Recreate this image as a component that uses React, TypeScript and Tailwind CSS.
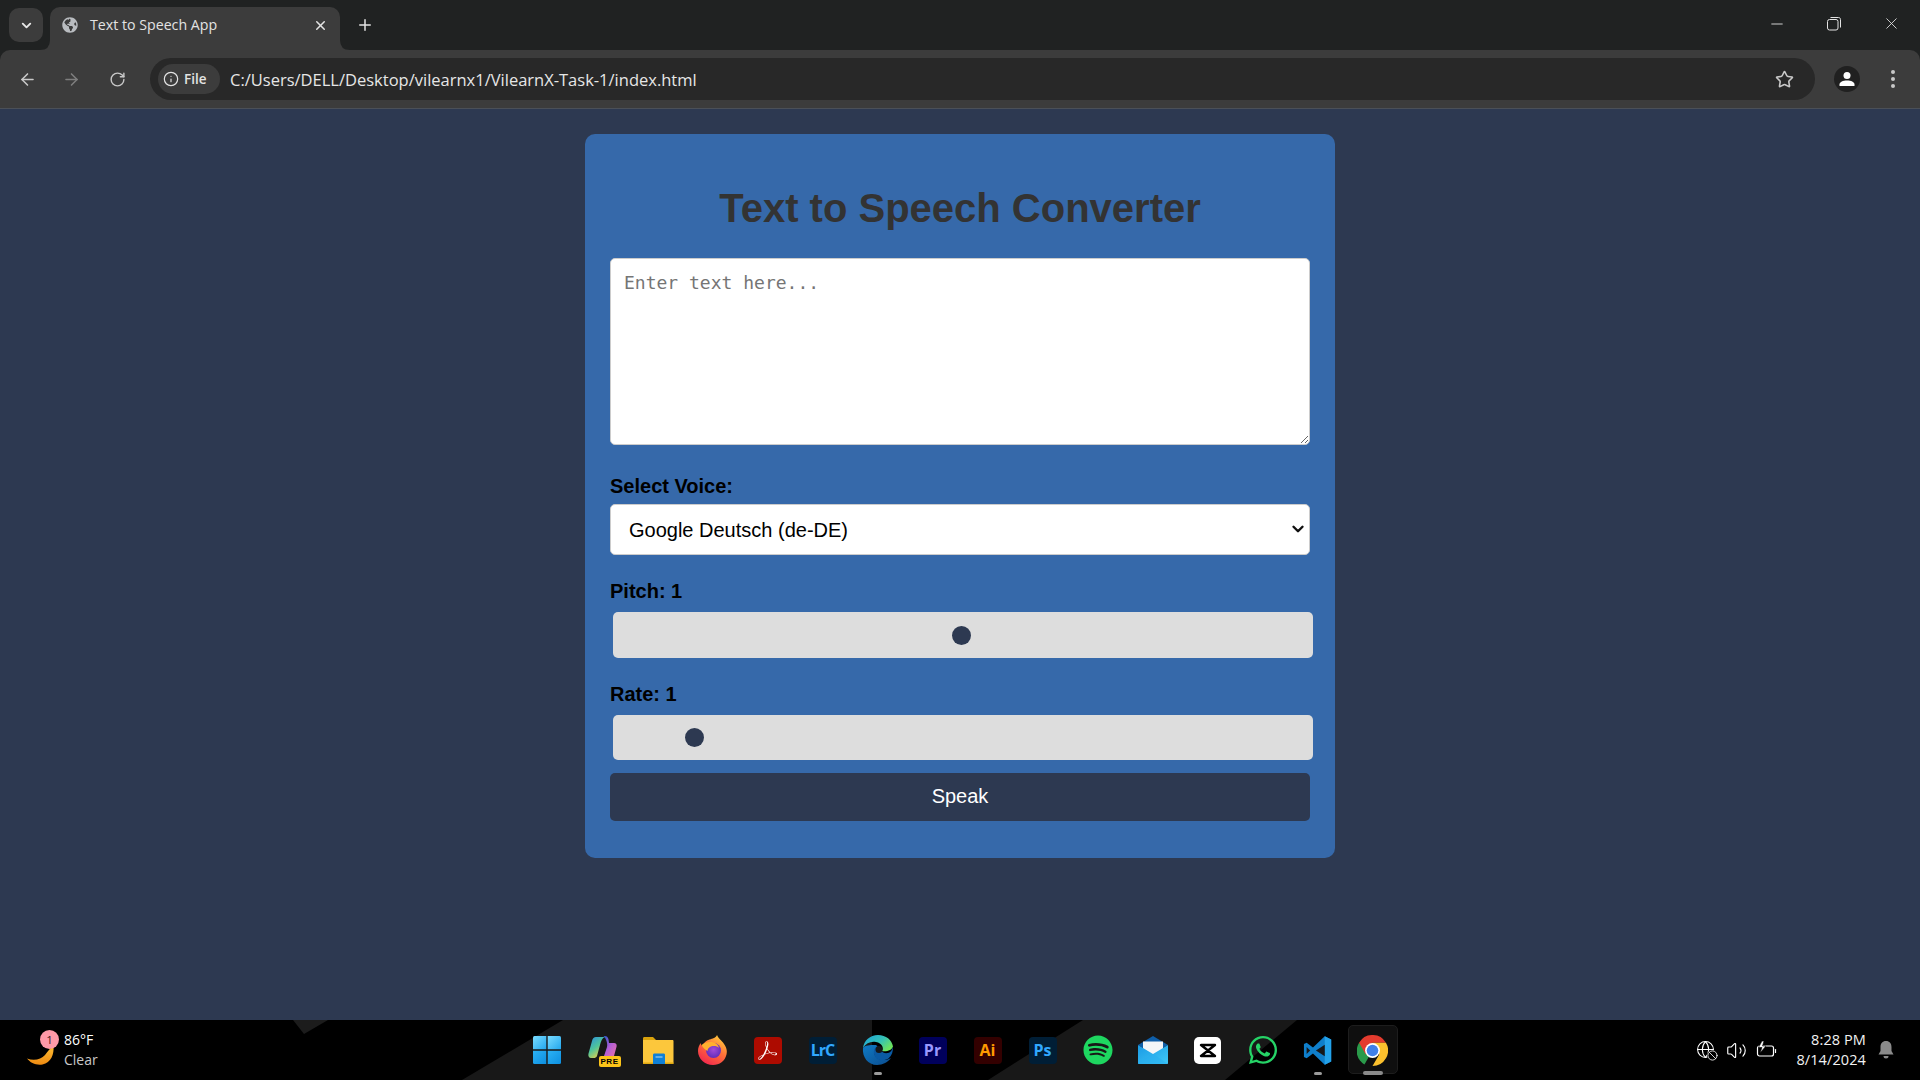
import React from "react";
import {
  ArrowLeft,
  ArrowRight,
  Ban,
  ChevronDown,
  Globe,
  Info,
  Minus,
  Plus,
  RotateCw,
  Star,
  Volume2,
  X,
} from "lucide-react";
import { FaGlobeAmericas, FaSpotify, FaWhatsapp } from "react-icons/fa";
import { SiAdobeacrobatreader } from "react-icons/si";

const uiFont = "font-['Open_Sans','Noto_Sans',sans-serif]";

const WindowsIcon = () => (
  <svg width="30" height="30" viewBox="0 0 30 30">
    <defs>
      <linearGradient id="winA" x1="0" y1="0" x2="1" y2="1">
        <stop offset="0" stopColor="#7adcff" />
        <stop offset="1" stopColor="#22a7ee" />
      </linearGradient>
      <linearGradient id="winB" x1="0" y1="0" x2="1" y2="1">
        <stop offset="0" stopColor="#2cb2f4" />
        <stop offset="1" stopColor="#0d8fe0" />
      </linearGradient>
    </defs>
    <path d="M1 2.5 Q1 1 2.5 1H14.3V14.3H1Z" fill="url(#winA)" />
    <path d="M15.7 1H27.5Q29 1 29 2.5V14.3H15.7Z" fill="url(#winA)" />
    <path d="M1 15.7H14.3V29H2.5Q1 29 1 27.5Z" fill="url(#winB)" />
    <path d="M15.7 15.7H29V27.5Q29 29 27.5 29H15.7Z" fill="url(#winB)" />
  </svg>
);

const CopilotIcon = () => (
  <div className="relative h-[32px] w-[32px]">
    <svg width="32" height="32" viewBox="0 0 32 32">
      <defs>
        <linearGradient id="copA" x1="0" y1="0" x2="0.6" y2="1">
          <stop offset="0" stopColor="#2a8fe0" />
          <stop offset="0.55" stopColor="#4fc59a" />
          <stop offset="1" stopColor="#e5d14b" />
        </linearGradient>
        <linearGradient id="copB" x1="0" y1="0" x2="1" y2="1">
          <stop offset="0" stopColor="#2357c9" />
          <stop offset="0.5" stopColor="#b25ed6" />
          <stop offset="1" stopColor="#ec6fa6" />
        </linearGradient>
      </defs>
      <path d="M9 3h9c-3 1-4 4-5 8l-3 11c-.6 1.6-2 2-3 2H4c-2 0-3-2-2.600-4L5 7c.6-2.500 2-4 4-4z" fill="url(#copA)" />
      <path d="M18 2c2 0 3 1.500 3.500 3.500L22 9h5c2 0 3 1.500 2.600 3.500L27 22H17l3-9c.8-3-.5-8-3.500-11z" fill="url(#copB)" />
    </svg>
    <span className="absolute bottom-[-1px] right-[-2px] flex h-[11px] w-[22px] items-center justify-center rounded-[2px] bg-[#fcc419] font-['Liberation_Sans',sans-serif] text-[8px] font-bold tracking-[0.5px] text-black">
      PRE
    </span>
  </div>
);

const FolderIcon = () => (
  <svg width="32" height="30" viewBox="0 0 32 30">
    <path d="M1 3.500C1 2.500 1.500 2 2.500 2H11l3 3h-13z" fill="#d9a20c" />
    <path d="M1 5h29.500c.5 0 1 .5 1 1v22c0 .5-.5 1-1 1H2c-.5 0-1-.5-1-1z" fill="#fcc73c" />
    <rect x="1" y="27.500" width="30.500" height="1.500" fill="#e0a80f" />
    <path d="M11 20c0-1 .5-1.500 1.500-1.500h9c1 0 1.500.5 1.500 1.500v9H11z" fill="#0f80d7" />
    <rect x="13.500" y="21.500" width="7" height="1" fill="#b6dcf6" />
  </svg>
);

const FirefoxIcon = () => (
  <svg width="32" height="32" viewBox="0 0 32 32">
    <defs>
      <linearGradient id="ffA" x1="0.8" y1="0" x2="0.2" y2="1">
        <stop offset="0" stopColor="#ffd43b" />
        <stop offset="0.45" stopColor="#ff7139" />
        <stop offset="1" stopColor="#f0224f" />
      </linearGradient>
      <radialGradient id="ffB" cx="0.5" cy="0.45" r="0.6">
        <stop offset="0" stopColor="#a14bd6" />
        <stop offset="1" stopColor="#5b2bb8" />
      </radialGradient>
    </defs>
    <path d="M20 1c1 3 3.500 4.500 6 7.500 3.500 4.500 4.500 8 3.500 12C28 27 22.500 31 16 31 8 31 1 25 1 17c0-3 1-6 2.800-8 0 1.500.7 2.500 1.700 3 1-3 3.500-5.500 7-6.500 3-.9 6.500-1.500 7.500-4.500z" fill="url(#ffA)" />
    <circle cx="16.500" cy="16.500" r="7.500" fill="url(#ffB)" />
    <path d="M4.500 11c3-2.500 8-3.500 12-2.500 3 .8 5 3 5.500 5.500-2-2-5-2.500-8-1.500-2 .7-3.500 2.500-3.500 4.500-2-1-4.500-3-6-6z" fill="#ffb02e" />
  </svg>
);

const AcrobatIcon = () => (
  <div className="flex h-[27px] w-[28px] items-center justify-center rounded-[4px] bg-[#ad0b00]">
    <SiAdobeacrobatreader size={19} color="#ffffff" />
  </div>
);

const AdobeIcon = ({ label, bg, color, wide }: { label: string; bg: string; color: string; wide?: boolean }) => (
  <div
    className={`flex h-[27px] items-center justify-center rounded-[4px] font-['Open_Sans',sans-serif] text-[16px] font-bold ${
      wide ? "w-[28px] tracking-[-1px]" : "w-[28px]"
    }`}
    style={{ backgroundColor: bg, color }}
  >
    {label}
  </div>
);

const EdgeIcon = () => (
  <svg width="32" height="32" viewBox="0 0 32 32">
    <defs>
      <linearGradient id="edgeA" x1="0" y1="0" x2="1" y2="0.6">
        <stop offset="0" stopColor="#1ba3dc" />
        <stop offset="0.6" stopColor="#35c1b4" />
        <stop offset="1" stopColor="#6de35e" />
      </linearGradient>
      <linearGradient id="edgeB" x1="0" y1="0" x2="1" y2="1">
        <stop offset="0" stopColor="#0f7ac4" />
        <stop offset="1" stopColor="#0b4c8e" />
      </linearGradient>
    </defs>
    <path d="M16 1C8 1 2 6.500 1 14c3-5 8-7 13-6 6 1 8 6 6 9 4 1 10-.5 11-4.500C30 6 24 1 16 1z" fill="url(#edgeA)" />
    <path d="M1 14c-1 9 5 17 14 17 6 0 11-3 14-7-3.500 2-9 3-13 .5-4-2.500-5-7-1.500-9.500 2-1.500 1-4-1.500-4C8 11 3 11 1 14z" fill="url(#edgeB)" />
    <path d="M13.500 13c3-1 6.500 0 6.500 4-.2 1.500 3 2.500 6 2 2-.5 4-2 5-6.500.2 5-1 9-4.500 12-3.500 2-8 2.500-11 .5-4-2.500-5-9-1.500-12z" fill="#0a5aa3" />
    <circle cx="17" cy="15.500" r="3.500" fill="#16181a" />
  </svg>
);

const MailIcon = () => (
  <svg width="32" height="30" viewBox="0 0 32 30">
    <defs>
      <linearGradient id="mailA" x1="0" y1="0" x2="1" y2="1">
        <stop offset="0" stopColor="#1a9ae5" />
        <stop offset="1" stopColor="#3fc8f6" />
      </linearGradient>
    </defs>
    <path d="M16 1 31 10 16 19 1 10z" fill="#0f5ea8" />
    <path d="M6 6.500h20v9L16 20 6 15.500z" fill="#f4f6f8" />
    <path d="M1 10l15 9 15-9v18c0 .6-.4 1-1 1H2c-.6 0-1-.4-1-1z" fill="url(#mailA)" />
    <path d="M16 19l15 10H2c-.6 0-1-.4-1-1z" fill="#28aef0" opacity="0.5" />
  </svg>
);

const CapCutIcon = () => (
  <div className="flex h-[27px] w-[27px] items-center justify-center rounded-[5px] bg-white">
    <svg width="20" height="15" viewBox="0 0 20 15" fill="none" stroke="#000" strokeWidth="2.400" strokeLinejoin="round">
      <path d="M3 2h14L3 13h14z" />
    </svg>
  </div>
);

const VsCodeIcon = () => (
  <svg width="31" height="31" viewBox="0 0 24 24">
    <path d="M17.600 1 8.500 9.700 3.600 6 1.500 7v10l2.100 1 4.900-3.700L17.600 23l5-2.400V3.400z" fill="#0f7fcb" />
    <path d="M17.600 1l5 2.400v17.200l-5 2.400z" fill="#23a2ea" />
    <path d="M17.600 7.500 10.800 12l6.800 4.500z" fill="#16181a" />
    <path d="M3.600 9.300v5.400L6.300 12z" fill="#16181a" />
  </svg>
);

const ChromeIcon = () => (
  <svg width="31" height="31" viewBox="0 0 48 48">
    <path d="M24 24 11.500 45.600A24 24 0 0 1 3.200 12z" fill="#2a9a4a" />
    <path d="M24 12h20.800A24 24 0 0 0 3.200 12l10.400 18z" fill="#e33b2e" />
    <path d="M24 12h20.800A24 24 0 0 1 24 48l10.400-18z" fill="#fbc02d" />
    <circle cx="24" cy="24" r="11.500" fill="#ffffff" />
    <circle cx="24" cy="24" r="9" fill="#3f7fe8" />
  </svg>
);

const taskbarIcons: React.ReactNode[] = [
  <WindowsIcon key="windows" />,
  <CopilotIcon key="copilot" />,
  <FolderIcon key="folder" />,
  <FirefoxIcon key="firefox" />,
  <AcrobatIcon key="acrobat" />,
  <AdobeIcon key="lrc" label="LrC" bg="#001e36" color="#31a8ff" wide />,
  <EdgeIcon key="edge" />,
  <AdobeIcon key="pr" label="Pr" bg="#00005b" color="#9999ff" />,
  <AdobeIcon key="ai" label="Ai" bg="#330000" color="#ff9a00" />,
  <AdobeIcon key="ps" label="Ps" bg="#001e36" color="#31a8ff" />,
  <FaSpotify key="spotify" size={30} color="#1ed760" />,
  <MailIcon key="mail" />,
  <CapCutIcon key="capcut" />,
  <FaWhatsapp key="whatsapp" size={32} color="#25d366" />,
  <VsCodeIcon key="vscode" />,
  <ChromeIcon key="chrome" />,
];

const TabStrip = () => (
  <div className="flex h-[50px] items-end bg-[#202222]">
    <div className="mb-[8px] ml-[9px] flex h-[34px] w-[34px] items-center justify-center rounded-[10px] bg-[#3c3c3c]">
      <ChevronDown size={15} strokeWidth={3} color="#e8e8e8" />
    </div>
    <div className="relative ml-[7px] flex h-[43px] w-[290px] items-center rounded-t-[10px] bg-[#3c3c3c] pb-[7px] pl-[12px] pr-[12px]">
      <FaGlobeAmericas size={16} color="#b9bcc0" />
      <span className={`ml-[12px] flex-1 text-[14.2px] text-[#e3e3e3] ${uiFont}`}>Text to Speech App</span>
      <X size={15} strokeWidth={2.4} color="#e3e3e3" />
      <svg className="absolute bottom-0 left-[-10px]" width="10" height="10" viewBox="0 0 10 10">
        <path d="M0 10Q10 10 10 0V10Z" fill="#3c3c3c" />
      </svg>
      <svg className="absolute bottom-0 right-[-10px]" width="10" height="10" viewBox="0 0 10 10">
        <path d="M10 10Q0 10 0 0V10Z" fill="#3c3c3c" />
      </svg>
    </div>
    <div className="mb-[16px] ml-[16px]">
      <Plus size={18} strokeWidth={2} color="#e3e3e3" />
    </div>
    <div className="mb-[17px] ml-auto flex items-center">
      <Minus size={18} strokeWidth={1.2} color="#e3e3e3" />
      <svg className="ml-[41px]" width="14" height="14" viewBox="0 0 14 14" fill="none" stroke="#e3e3e3" strokeWidth="1">
        <rect x="0.500" y="2.500" width="10.500" height="10.500" rx="2" />
        <path d="M3.500 0.500h8c1.200 0 2 .8 2 2v8" />
      </svg>
      <X className="ml-[41px] mr-[19px]" size={19} strokeWidth={1.1} color="#e3e3e3" />
    </div>
  </div>
);

const Toolbar = () => (
  <div className="flex h-[59px] items-center rounded-t-[10px] border-b border-[#4b5058] bg-[#3c3c3c]">
    <ArrowLeft className="ml-[18px]" size={19} strokeWidth={2} color="#c8c8c8" />
    <ArrowRight className="ml-[25px]" size={19} strokeWidth={2} color="#7e7e7e" />
    <RotateCw className="ml-[28px]" size={17} strokeWidth={2} color="#c8c8c8" />
    <div className="ml-[24px] flex h-[42px] w-[1665px] items-center rounded-full bg-[#282828] pl-[8px] pr-[21px]">
      <div className="flex h-[30px] w-[62px] items-center rounded-full bg-[#3c3c3c] pl-[5px]">
        <Info size={16} strokeWidth={1.8} color="#e3e3e3" />
        <span className={`ml-[5px] text-[13.5px] font-semibold text-[#e3e3e3] ${uiFont}`}>File</span>
      </div>
      <span className={`ml-[10px] flex-1 pt-[2px] text-[16.5px] text-[#e6e6e6] ${uiFont}`}>
        C:/Users/DELL/Desktop/vilearnx1/VilearnX-Task-1/index.html
      </span>
      <Star size={19} strokeWidth={2} color="#c8c8c8" />
    </div>
    <div className="ml-[19px] flex h-[26px] w-[26px] items-center justify-center rounded-full bg-[#202020]">
      <svg width="16" height="16" viewBox="0 0 16 16" fill="#ffffff">
        <circle cx="8" cy="4.500" r="3.500" />
        <path d="M.5 15v-1.500C.5 11 4 9.500 8 9.500s7.500 1.500 7.500 4V15z" />
      </svg>
    </div>
    <div className="ml-[31px] flex flex-col gap-[3.500px]">
      <span className="h-[3.500px] w-[3.500px] rounded-full bg-[#c8c8c8]" />
      <span className="h-[3.500px] w-[3.500px] rounded-full bg-[#c8c8c8]" />
      <span className="h-[3.500px] w-[3.500px] rounded-full bg-[#c8c8c8]" />
    </div>
  </div>
);

const Slider = ({ value, height }: { value: number; height: string }) => (
  <input
    type="range"
    min={0}
    max={1000}
    defaultValue={value}
    className={`ml-[3px] block w-[700px] cursor-pointer appearance-none rounded-[5px] bg-[#dddddd] [&::-webkit-slider-thumb]:h-[19px] [&::-webkit-slider-thumb]:w-[19px] [&::-webkit-slider-thumb]:appearance-none [&::-webkit-slider-thumb]:rounded-full [&::-webkit-slider-thumb]:bg-[#2d3951] ${height}`}
  />
);

const Card = () => (
  <div className="w-[750px] rounded-[10px] bg-[#3669aa] px-[25px] pb-[37px] pt-[25px] font-['Liberation_Sans',Arial,sans-serif]">
    <h1 className="mb-[27px] mt-[26px] text-center text-[40px] font-bold leading-[46px] text-[#333333]">
      Text to Speech Converter
    </h1>
    <textarea
      placeholder="Enter text here..."
      className="block h-[187px] w-[700px] resize rounded-[5px] border border-[#cccccc] bg-white px-[13px] py-[13px] font-['DejaVu_Sans_Mono',monospace] text-[18px] leading-[21px] outline-none placeholder:text-[#757575]"
    />
    <label className="mb-[6px] mt-[30px] block text-[20px] font-bold leading-[23px] text-black">Select Voice:</label>
    <div className="relative">
      <select className="block h-[51px] w-[700px] appearance-none rounded-[5px] border border-[#cccccc] bg-white pl-[18px] text-[20px] text-black outline-none">
        <option>Google Deutsch (de-DE)</option>
      </select>
      <ChevronDown className="pointer-events-none absolute right-[3px] top-[16px]" size={18} strokeWidth={3.2} color="#111111" />
    </div>
    <label className="mb-[9px] mt-[25px] block text-[20px] font-bold leading-[23px] text-black">Pitch: 1</label>
    <Slider value={498} height="h-[46px]" />
    <label className="mb-[9px] mt-[25px] block text-[20px] font-bold leading-[23px] text-black">Rate: 1</label>
    <Slider value={105} height="h-[45px]" />
    <button className="mt-[13px] block h-[48px] w-[700px] rounded-[5px] bg-[#2d3951] pb-[2px] text-[20px] text-white">
      Speak
    </button>
  </div>
);

const Taskbar = () => (
  <div className={`relative flex h-[60px] items-center overflow-hidden bg-black ${uiFont}`}>
    {/* wallpaper showing through the taskbar */}
    <svg className="absolute left-0 top-0" width="1920" height="60" viewBox="0 0 1920 60">
      <path d="M563 0H872V60H462Z" fill="#181818" />
      <path d="M1083 0H1297L1225 60H988Z" fill="#181818" />
      <path d="M293 0H328L304 14Z" fill="#1c1c1c" />
    </svg>
    <div className="relative flex w-[520px] items-center pl-[27px]">
      <div className="relative h-[32px] w-[30px]">
        <svg className="absolute left-0 top-[3px]" width="30" height="30" viewBox="0 0 30 30">
          <defs>
            <linearGradient id="moon" x1="0" y1="0" x2="0" y2="1">
              <stop offset="0" stopColor="#fdbe33" />
              <stop offset="1" stopColor="#ee8a12" />
            </linearGradient>
          </defs>
          <path d="M26.500 9c.8 8-2.500 17-11 18.500C9 28.500 3.500 26 0 21.500c7 2.500 14 1 18-3.500 2-2.500 4-6 8.500-9z" fill="url(#moon)" />
        </svg>
        <span className="absolute left-[13px] top-[-4px] flex h-[19px] w-[19px] items-center justify-center rounded-full bg-[#ff99a8] text-[11.500px] text-[#3a1a20]">
          1
        </span>
      </div>
      <div className="ml-[7px] flex flex-col">
        <span className="mt-[-1px] text-[14px] leading-[20px] text-white">86°F</span>
        <span className="text-[14px] leading-[20px] text-[#c8c8c8]">Clear</span>
      </div>
    </div>
    <div className="relative flex">
      {taskbarIcons.map((icon, i) => (
        <div key={i} className="relative flex h-[60px] w-[55px] items-center justify-center">
          {i === 15 && (
            <div className="absolute left-[2.500px] top-[5px] h-[49px] w-[50px] rounded-[5px] border border-[#1d1d1d] bg-[#0f0f0f]" />
          )}
          <div className={`relative ${i === 0 ? "mr-[2px]" : ""}`}>{icon}</div>
          {(i === 6 || i === 14) && (
            <div className="absolute left-[23.500px] top-[52px] h-[3px] w-[8px] rounded-full bg-[#9a9a9a]" />
          )}
          {i === 15 && (
            <div className="absolute left-[17.500px] top-[51px] h-[4px] w-[20px] rounded-full bg-[#8a8a8a]" />
          )}
        </div>
      ))}
    </div>
    <div className="relative ml-auto flex items-center pr-[26px]">
      <div className="relative mr-[10px] h-[20px] w-[20px]">
        <Globe size={19} strokeWidth={1.3} color="#ffffff" />
        <div className="absolute bottom-[-1px] right-[-2px] rounded-full bg-black">
          <Ban size={11} strokeWidth={1.8} color="#ffffff" />
        </div>
      </div>
      <Volume2 size={21} strokeWidth={1.3} color="#ffffff" />
      <svg className="ml-[9px]" width="21" height="20" viewBox="0 0 21 20" fill="none" stroke="#ffffff" strokeWidth="1.200">
        <rect x="1.500" y="6" width="16" height="10" rx="2" />
        <path d="M19.500 9.500v3" strokeLinecap="round" />
        <path d="M6 1 2.500 7.500h3.500L4 13l6-7H6.500L8 1z" fill="#ffffff" stroke="#000000" strokeWidth="0.600" />
      </svg>
      <div className="ml-[19px] flex flex-col items-end text-[14.5px] leading-[20px] tracking-[0.1px] text-[#f2f2f2]">
        <span>8:28 PM</span>
        <span>8/14/2024</span>
      </div>
      <svg className="ml-[12px]" width="16" height="18" viewBox="0 0 16 18" fill="#8a8a8a">
        <path d="M8 0C4.500 0 2.500 2.500 2.500 6v4L.5 13.500h15L13.500 10V6C13.500 2.500 11.500 0 8 0z" />
        <path d="M5.500 15a2.500 2.500 0 0 0 5 0z" />
      </svg>
    </div>
  </div>
);

export default function App() {
  return (
    <div className="flex h-screen flex-col overflow-hidden bg-[#2d3951]">
      <div className="bg-[#202222]">
        <TabStrip />
        <Toolbar />
      </div>
      <main className="flex flex-1 items-start justify-center pt-[25px]">
        <Card />
      </main>
      <Taskbar />
    </div>
  );
}
